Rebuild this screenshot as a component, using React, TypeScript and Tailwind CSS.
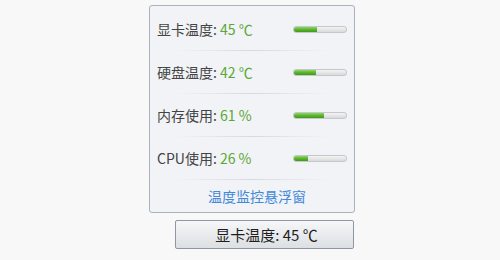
import React from "react";

const rows = [
  { label: "显卡温度", value: "45 ℃", pct: 44 },
  { label: "硬盘温度", value: "42 ℃", pct: 42 },
  { label: "内存使用", value: "61 %", pct: 58 },
  { label: "CPU使用", value: "26 %", pct: 26 },
];

const Bar = ({ pct }: { pct: number }) => (
  <div className="h-[7px] w-[54px] rounded-[3px] border border-[#c4c7cb] bg-gradient-to-b from-[#f4f4f4] to-[#d9d9d9] overflow-hidden">
    <div
      className="h-full bg-gradient-to-b from-[#8fd660] via-[#5cb52c] to-[#3f9a18]"
      style={{ width: `${pct}%` }}
    />
  </div>
);

const App = () => {
  return (
    <div
      className="w-[500px] h-[260px] bg-[#f8f8f8] pl-[149px] pt-[5px]"
      style={{ fontFamily: '"Noto Sans CJK SC", "Noto Sans", sans-serif' }}
    >
      <div className="w-[206px] h-[208px] rounded-[3px] border border-[#a8b1bd] bg-[#f1f3f6] pt-[2px] flex flex-col">
        {rows.map((r) => (
          <div key={r.label}>
            <div className="h-[42px] flex items-center justify-between pl-[7px] pr-[7px]">
              <div className="text-[14px] leading-none">
                <span className="text-[#444]">{r.label}:</span>
                <span className="text-[#5aa834]"> {r.value}</span>
              </div>
              <Bar pct={r.pct} />
            </div>
            <div className="mx-[24px] h-px bg-gradient-to-r from-transparent via-[#d6dae0] to-transparent" />
          </div>
        ))}
        <div className="flex-1 flex items-center justify-center text-[14px] text-[#4289d9] leading-none pl-[10px]">
          温度监控悬浮窗
        </div>
      </div>
      <button className="mt-[7px] ml-[26px] w-[179px] h-[29px] rounded-[2px] border border-[#8f969f] bg-gradient-to-b from-[#f6f7f8] to-[#dcdfe3] text-[15px] text-[#1e1e1e] flex items-center justify-center leading-none pl-[4px]">
        显卡温度: 45 ℃
      </button>
    </div>
  );
};

export default App;
